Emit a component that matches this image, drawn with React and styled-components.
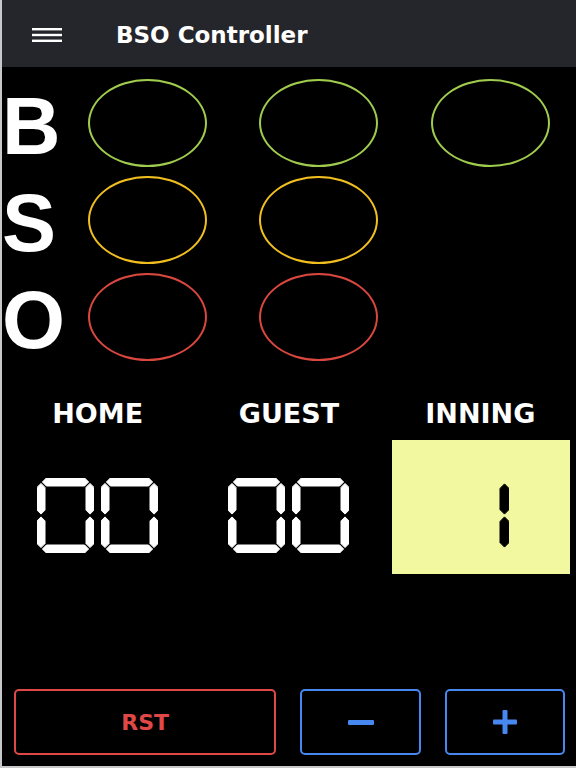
import React from "react";
import styled, { createGlobalStyle } from "styled-components";

const GlobalStyle = createGlobalStyle`
  html, body { margin: 0; padding: 0; background: #000; }
  body { font-family: "DejaVu Sans", "Liberation Sans", Arial, sans-serif; }
  *, *::before, *::after { box-sizing: border-box; }
`;

const Frame = styled.div`
  width: 576px;
  height: 768px;
  display: flex;
  flex-direction: column;
  background: #000;
  border-left: 2px solid #c8c8ca;
  border-bottom: 2px solid #c8c8ca;
`;

const Header = styled.header`
  flex: none;
  height: 67px;
  display: flex;
  align-items: center;
  gap: 54px;
  padding: 2px 0 0 30px;
  background: #25262b;
`;

const MenuButton = styled.span`
  display: flex;
  width: 30px;
  height: 14px;
`;

const Title = styled.h1`
  margin: 0;
  font-size: 23px;
  font-weight: 700;
  color: #fff;
`;

const CountPanel = styled.section`
  display: grid;
  grid-template-columns: 60px repeat(3, 1fr);
  grid-auto-rows: 88px;
  row-gap: 9px;
  padding-top: 12px;
`;

const Letter = styled.span`
  display: block;
  padding-top: 7px;
  font-family: "Liberation Sans", Arial, sans-serif;
  font-size: 81px;
  line-height: 81px;
  font-weight: 700;
  color: #fff;
`;

const Lamp = styled.div`
  justify-self: center;
  width: 119px;
  height: 88px;
  border: 2.5px solid ${(p) => p.$color};
  border-radius: 50%;
`;

const Scoreboard = styled.section`
  display: grid;
  grid-template-columns: repeat(3, 1fr);
  row-gap: 11px;
  margin-top: 38px;
`;

const Label = styled.div`
  text-align: center;
  font-size: 27px;
  line-height: 30px;
  font-weight: 700;
  color: #fff;
`;

const ValueCell = styled.div`
  height: 134px;
  display: flex;
  justify-content: center;
  gap: 7px;
  padding-top: 38px;
  margin: ${(p) => (p.$lit ? "0 6px 0 7px" : "0")};
  background: ${(p) => (p.$lit ? "#f2f8a0" : "transparent")};
`;

const ButtonBar = styled.div`
  margin-top: auto;
  display: grid;
  grid-template-columns: 263fr 121fr 120fr;
  column-gap: 24px;
  padding: 0 11px 11px 12px;
`;

const ActionButton = styled.button`
  height: 66px;
  display: flex;
  align-items: center;
  justify-content: center;
  background: transparent;
  border: 2px solid ${(p) => p.$color};
  border-radius: 5px;
  color: ${(p) => p.$color};
  font-family: inherit;
  font-size: 22px;
  font-weight: 700;
  padding: 0;
`;

const SEGMENTS = {
  "0": "abcdef",
  "1": "bc",
  "2": "abged",
  "3": "abgcd",
  "4": "fgbc",
  "5": "afgcd",
  "6": "afgedc",
  "7": "abc",
  "8": "abcdefg",
  "9": "abcdfg",
  " ": "",
};

function hSeg(xa, xb, yc, t) {
  const hs = t / 2;
  return [
    [xa, yc],
    [xa + hs, yc - hs],
    [xb - hs, yc - hs],
    [xb, yc],
    [xb - hs, yc + hs],
    [xa + hs, yc + hs],
  ];
}

function vSeg(ya, yb, xc, t) {
  const hs = t / 2;
  return [
    [xc, ya],
    [xc + hs, ya + hs],
    [xc + hs, yb - hs],
    [xc, yb],
    [xc - hs, yb - hs],
    [xc - hs, ya + hs],
  ];
}

function SevenSeg({ value, color, w = 57, h = 75, t = 8 }) {
  const g = 1.4;
  const hs = t / 2;
  const mid = h / 2;
  const segs = {
    a: hSeg(hs + g, w - hs - g, hs, t),
    g: hSeg(hs + g, w - hs - g, mid, t),
    d: hSeg(hs + g, w - hs - g, h - hs, t),
    f: vSeg(hs + g, mid - g, hs, t),
    e: vSeg(mid + g, h - hs - g, hs, t),
    b: vSeg(hs + g, mid - g, w - hs, t),
    c: vSeg(mid + g, h - hs - g, w - hs, t),
  };
  const on = SEGMENTS[value] || "";
  return (
    <svg width={w} height={h} viewBox={`0 0 ${w} ${h}`}>
      {on.split("").map((k) => (
        <polygon
          key={k}
          points={segs[k].map((p) => p.join(",")).join(" ")}
          fill={color}
          stroke={color}
          strokeWidth="1"
          strokeLinejoin="round"
        />
      ))}
    </svg>
  );
}

const counts = [
  { letter: "B", lamps: 3, color: "#a0cc4e" },
  { letter: "S", lamps: 2, color: "#f0bf1f" },
  { letter: "O", lamps: 2, color: "#d9473f" },
];

export default function App() {
  return (
    <>
      <GlobalStyle />
      <Frame>
        <Header>
          <MenuButton>
            <svg width="30" height="14" viewBox="0 0 30 14">
              <rect x="0" y="0" width="30" height="2.4" fill="#fff" />
              <rect x="0" y="5.8" width="30" height="2.4" fill="#fff" />
              <rect x="0" y="11.6" width="30" height="2.4" fill="#fff" />
            </svg>
          </MenuButton>
          <Title>BSO Controller</Title>
        </Header>

        <CountPanel>
          {counts.map((row) => (
            <React.Fragment key={row.letter}>
              <Letter>{row.letter}</Letter>
              {[0, 1, 2].map((i) =>
                i < row.lamps ? (
                  <Lamp key={i} $color={row.color} />
                ) : (
                  <span key={i} />
                )
              )}
            </React.Fragment>
          ))}
        </CountPanel>

        <Scoreboard>
          <Label>HOME</Label>
          <Label>GUEST</Label>
          <Label>INNING</Label>
          <ValueCell>
            <SevenSeg value="0" color="#fff" />
            <SevenSeg value="0" color="#fff" />
          </ValueCell>
          <ValueCell>
            <SevenSeg value="0" color="#fff" />
            <SevenSeg value="0" color="#fff" />
          </ValueCell>
          <ValueCell $lit>
            <SevenSeg value="1" color="#000" t={9} />
          </ValueCell>
        </Scoreboard>

        <ButtonBar>
          <ActionButton $color="#e04848">RST</ActionButton>
          <ActionButton $color="#4687f0" aria-label="minus">
            <svg width="26" height="5" viewBox="0 0 26 5">
              <rect width="26" height="5" rx="1" fill="#4687f0" />
            </svg>
          </ActionButton>
          <ActionButton $color="#4687f0" aria-label="plus">
            <svg width="24" height="24" viewBox="0 0 24 24">
              <rect x="0" y="9.5" width="24" height="5" rx="1" fill="#4687f0" />
              <rect x="9.5" y="0" width="5" height="24" rx="1" fill="#4687f0" />
            </svg>
          </ActionButton>
        </ButtonBar>
      </Frame>
    </>
  );
}
